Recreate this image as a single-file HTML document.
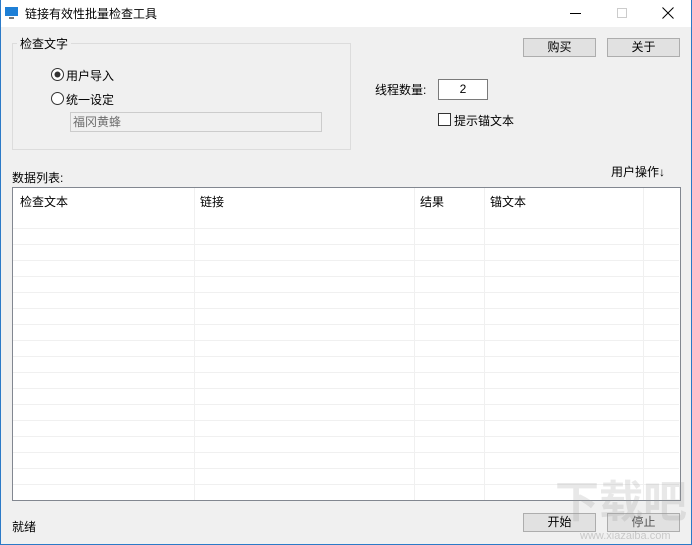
<!DOCTYPE html>
<html style="overflow:hidden;width:692px;height:545px"><head><meta charset="utf-8"><style>
*{margin:0;padding:0;box-sizing:border-box}
body{width:692px;height:545px;background:#f0f0f0;font-family:"Liberation Sans","Noto Sans CJK SC",sans-serif;font-size:12px;color:#000;position:relative;overflow:hidden}
.a{position:absolute;white-space:nowrap}
.win{position:absolute;left:0;top:0;width:692px;height:545px;border:1px solid #2b7ac7;border-top:none}
.title{left:1px;top:0;width:690px;height:27px;background:#fff}
.btn{position:absolute;background:#e1e1e1;border:1px solid #adadad;text-align:center;line-height:17px;font-size:12px}
.row{position:absolute;left:13px;width:666px;height:1px;background:#f0f0f0}
.col{position:absolute;top:188px;width:1px;height:312px;background:#f0f0f0}
</style></head><body>
<div class="win"></div>
<div class="a title"></div>
<svg class="a" style="left:5px;top:6px" width="14" height="14"><rect x="0" y="1" width="13" height="9" fill="#1e7fd6"/><rect x="4" y="11" width="5" height="2" fill="#777"/></svg>
<div class="a" style="left:25px;top:5px;font-size:12px;color:#000">链接有效性批量检查工具</div>
<div class="a" style="left:570px;top:13px;width:11px;height:1px;background:#000"></div>
<div class="a" style="left:617px;top:8px;width:10px;height:10px;border:1px solid #ccc"></div>
<svg class="a" style="left:662px;top:7px" width="12" height="12"><path d="M0.5 0.5L11.5 11.5M11.5 0.5L0.5 11.5" stroke="#000" stroke-width="1"/></svg>

<div class="a" style="left:12px;top:43px;width:339px;height:107px;border:1px solid #dcdcdc"></div>
<div class="a" style="left:17px;top:35px;background:#f0f0f0;padding:0 3px">检查文字</div>
<svg class="a" style="left:51px;top:68px" width="13" height="13"><circle cx="6.5" cy="6.5" r="6" fill="#fff" stroke="#333"/><circle cx="6.5" cy="6.5" r="3" fill="#333"/></svg>
<div class="a" style="left:66px;top:67px">用户导入</div>
<svg class="a" style="left:51px;top:92px" width="13" height="13"><circle cx="6.5" cy="6.5" r="6" fill="#fff" stroke="#333"/></svg>
<div class="a" style="left:66px;top:91px">统一设定</div>
<div class="a" style="left:70px;top:112px;width:252px;height:20px;border:1px solid #ccc;background:#f0f0f0;color:#6d6d6d;padding:1px 2px;line-height:16px">福冈黄蜂</div>

<div class="btn" style="left:523px;top:38px;width:73px;height:19px">购买</div>
<div class="btn" style="left:607px;top:38px;width:73px;height:19px">关于</div>
<div class="a" style="left:375px;top:81px">线程数量:</div>
<div class="a" style="left:438px;top:79px;width:50px;height:21px;border:1px solid #7a7a7a;background:#fff;text-align:center;line-height:18px">2</div>
<div class="a" style="left:438px;top:113px;width:13px;height:13px;border:1px solid #333;background:#fff"></div>
<div class="a" style="left:454px;top:112px">提示锚文本</div>
<div class="a" style="left:12px;top:169px">数据列表:</div>
<div class="a" style="left:611px;top:163px">用户操作↓</div>

<div class="a" style="left:12px;top:187px;width:669px;height:314px;border:1px solid #828790;background:#fff"></div>
<div class="col" style="left:194px"></div><div class="col" style="left:414px"></div><div class="col" style="left:484px"></div><div class="col" style="left:643px"></div>
<div class="a" style="left:20px;top:193px">检查文本</div>
<div class="a" style="left:200px;top:193px">链接</div>
<div class="a" style="left:420px;top:193px">结果</div>
<div class="a" style="left:490px;top:193px">锚文本</div>
<div class="row" style="top:228px"></div><div class="row" style="top:244px"></div><div class="row" style="top:260px"></div><div class="row" style="top:276px"></div><div class="row" style="top:292px"></div><div class="row" style="top:308px"></div><div class="row" style="top:324px"></div><div class="row" style="top:340px"></div><div class="row" style="top:356px"></div><div class="row" style="top:372px"></div><div class="row" style="top:388px"></div><div class="row" style="top:404px"></div><div class="row" style="top:420px"></div><div class="row" style="top:436px"></div><div class="row" style="top:452px"></div><div class="row" style="top:468px"></div><div class="row" style="top:484px"></div>

<div class="a" style="left:12px;top:518px">就绪</div>
<div class="btn" style="left:523px;top:513px;width:73px;height:19px">开始</div>
<div class="btn" style="left:607px;top:513px;width:73px;height:19px;color:#555">停止</div>
<div class="a" style="left:555px;top:478px;font-size:44px;line-height:50px;color:rgba(150,150,150,0.22);font-weight:bold">下载吧</div>
<div class="a" style="left:580px;top:530px;font-size:11px;color:rgba(140,140,140,0.4)">www.xiazaiba.com</div>
</body></html>
